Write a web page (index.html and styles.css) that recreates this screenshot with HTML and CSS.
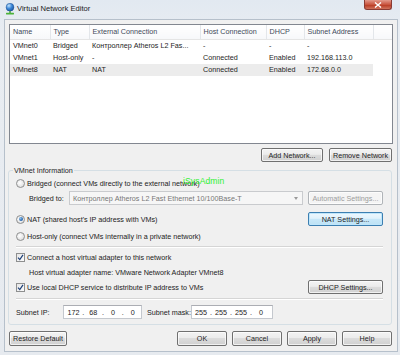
FILE: index.html
```html
<!DOCTYPE html>
<html>
<head>
<meta charset="utf-8">
<link rel="stylesheet" href="styles.css">
</head>
<body>
<div class="win">
  <div class="titlebar">
    <svg class="appicon" width="10" height="12" viewBox="0 0 10 12">
      <defs>
        <radialGradient id="g" cx="0.35" cy="0.3" r="0.8">
          <stop offset="0" stop-color="#bfe2ff"/>
          <stop offset="0.5" stop-color="#3a86d6"/>
          <stop offset="1" stop-color="#1a4f9a"/>
        </radialGradient>
      </defs>
      <circle cx="5" cy="4.2" r="3.9" fill="url(#g)" stroke="#21508f" stroke-width="0.5"/>
      <rect x="4.3" y="8" width="1.4" height="2" fill="#3d9a2e"/>
      <rect x="1" y="9.8" width="8" height="1.6" rx="0.4" fill="#4cb33a"/>
    </svg>
    <span class="title">Virtual Network Editor</span>
    <div class="close">
      <svg width="8" height="6" viewBox="0 0 8 6"><path d="M1 0.5 L7 5.5 M7 0.5 L1 5.5" stroke="#fff" stroke-width="1.4"/></svg>
    </div>
  </div>
  <div class="client">
    <div class="list">
      <table class="grid">
        <colgroup>
          <col class="c1"><col class="c2"><col class="c3"><col class="c4"><col class="c5"><col class="c6"><col>
        </colgroup>
        <thead>
          <tr><th>Name</th><th>Type</th><th>External Connection</th><th>Host Connection</th><th>DHCP</th><th>Subnet Address</th><th class="filler"></th></tr>
        </thead>
        <tbody>
          <tr class="gap"><td colspan="7"></td></tr>
          <tr><td>VMnet0</td><td>Bridged</td><td>Контроллер Atheros L2 Fas...</td><td>-</td><td>-</td><td>-</td><td></td></tr>
          <tr><td>VMnet1</td><td>Host-only</td><td>-</td><td>Connected</td><td>Enabled</td><td>192.168.113.0</td><td></td></tr>
          <tr class="sel"><td>VMnet8</td><td>NAT</td><td>NAT</td><td>Connected</td><td>Enabled</td><td>172.68.0.0</td><td class="nosel"></td></tr>
        </tbody>
      </table>
    </div>
    <div class="listbtns">
      <div class="btn w62">Add Network...</div>
      <div class="btn w63">Remove Network</div>
    </div>
    <div class="group">
      <div class="gtitle">VMnet Information</div>
      <div class="wm">iSysAdmin</div>
      <div class="row r12 first">
        <span class="radio"></span><span class="lbl">Bridged (connect VMs directly to the external network)</span>
      </div>
      <div class="row r14 mt2">
        <span class="bridgelbl">Bridged to:</span>
        <div class="combo"><span class="combotext">Контроллер Atheros L2 Fast Ethernet 10/100Base-T</span><span class="arrow"></span></div>
        <div class="btn w75 disabled ml5">Automatic Settings...</div>
      </div>
      <div class="row r14 mt7">
        <span class="radio on"></span><span class="lbl">NAT (shared host's IP address with VMs)</span>
        <div class="btn w75 default right">NAT Settings...</div>
      </div>
      <div class="row r12 mt4">
        <span class="radio"></span><span class="lbl">Host-only (connect VMs internally in a private network)</span>
      </div>
      <div class="sep mt4"></div>
      <div class="row r12 mt3">
        <span class="check"><svg width="7" height="7" viewBox="0 0 7 7"><path d="M1 3.6 L2.8 5.6 L6 0.8" fill="none" stroke="#1c3f78" stroke-width="1.2"/></svg></span><span class="lbl">Connect a host virtual adapter to this network</span>
      </div>
      <div class="row r12 mt3">
        <span class="indent">Host virtual adapter name: VMware Network Adapter VMnet8</span>
      </div>
      <div class="row r14 mt2">
        <span class="check"><svg width="7" height="7" viewBox="0 0 7 7"><path d="M1 3.6 L2.8 5.6 L6 0.8" fill="none" stroke="#1c3f78" stroke-width="1.2"/></svg></span><span class="lbl">Use local DHCP service to distribute IP address to VMs</span>
        <div class="btn w75 right">DHCP Settings...</div>
      </div>
      <div class="sep mt4"></div>
      <div class="row r14 mt5">
        <span class="iplbl">Subnet IP:</span>
        <div class="ip w79"><span class="seg">172</span><span class="dot">.</span><span class="seg">68</span><span class="dot">.</span><span class="seg">0</span><span class="dot">.</span><span class="seg">0</span></div>
        <span class="masklbl">Subnet mask:</span>
        <div class="ip w82"><span class="seg">255</span><span class="dot">.</span><span class="seg">255</span><span class="dot">.</span><span class="seg">255</span><span class="dot">.</span><span class="seg">0</span></div>
      </div>
    </div>
    <div class="footer">
      <div class="btn w58">Restore Default</div>
      <div class="btn w50 right">OK</div>
      <div class="btn w50">Cancel</div>
      <div class="btn w50">Apply</div>
      <div class="btn w50">Help</div>
    </div>
  </div>
</div>
</body>
</html>
```

FILE: styles.css
```css
* { box-sizing: border-box; }
html, body { margin: 0; padding: 0; }
body {
  width: 400px;
  height: 355px;
  overflow: hidden;
  font-family: "Liberation Sans", Arial, sans-serif;
  font-size: 7.2px;
  color: #222;
  background: #e6ebf1;
}
.win {
  width: 400px;
  height: 355px;
  background: linear-gradient(#e2e9f1, #e9edf2 40px, #e6eaef);
}
.titlebar {
  height: 19px;
  display: flex;
  align-items: flex-start;
}
.appicon { margin: 3px 0 0 5px; }
.title {
  margin: 4px 0 0 2px;
  font-size: 7.6px;
  line-height: 10px;
  color: #1a1a1a;
}
.close {
  margin-left: auto;
  margin-right: 8px;
  width: 28px;
  height: 10px;
  border: 1px solid #8a3b33;
  border-top: none;
  border-radius: 0 0 3px 3px;
  background: linear-gradient(#e39a8c, #c9553f 50%, #b83a22 55%, #d0735d);
  display: flex;
  align-items: center;
  justify-content: center;
}
.client {
  margin-left: 4px;
  width: 394px;
  height: 333px;
  background: #f0f0f0;
  border: 1px solid #b6c0cb;
  padding: 4px 0 0 3px;
}
.list {
  margin-left: 1px;
  width: 384px;
  height: 120px;
  border: 1px solid #828790;
  background: #fff;
}
.grid {
  border-collapse: collapse;
  table-layout: fixed;
  width: 382px;
}
.c1 { width: 40px; }
.c2 { width: 39px; }
.c3 { width: 111px; }
.c4 { width: 66px; }
.c5 { width: 38px; }
.c6 { width: 69px; }
.grid th {
  height: 14px;
  padding: 0 0 0 3px;
  font-weight: normal;
  text-align: left;
  color: #3e4a5a;
  border-right: 1px solid #e3e6ea;
  border-bottom: 1px solid #e5e5e5;
  background: linear-gradient(#ffffff, #f7f8fa);
  white-space: nowrap;
  overflow: hidden;
  line-height: 13px;
}
.grid th.filler { border-right: none; }
.grid td {
  height: 12px;
  padding: 0 0 0 3px;
  line-height: 12px;
  white-space: nowrap;
  overflow: hidden;
  color: #252525;
}
.grid tr.gap td { height: 1px; line-height: 1px; padding: 0; }
.grid tr.sel td { background: #ececec; }
.grid tr.sel td.nosel { background: #fff; }

.btn {
  height: 14px;
  border: 1px solid #707070;
  border-radius: 2px;
  background: linear-gradient(#f3f3f3, #ececec 45%, #dcdcdc 50%, #d0d0d0);
  box-shadow: inset 0 0 0 1px rgba(255,255,255,0.7);
  display: flex;
  align-items: center;
  justify-content: center;
  white-space: nowrap;
  color: #1e1e1e;
  flex: none;
}
.btn.disabled {
  border-color: #b0b4b8;
  background: #f4f4f4;
  color: #9c9c9c;
}
.btn.default {
  border-color: #3c7fb1;
  background: linear-gradient(#eef8fe, #e0f2fc 45%, #c8e8f9 50%, #bde2f5);
  box-shadow: inset 0 0 0 1px #bfe6fb;
}
.w50 { width: 50px; }
.w58 { width: 58px; }
.w62 { width: 62px; }
.w63 { width: 63px; }
.w75 { width: 75px; }
.ml5 { margin-left: 5px; }
.right { margin-left: auto; }

.listbtns {
  display: flex;
  justify-content: flex-end;
  gap: 6px;
  width: 384px;
  margin-top: 4px;
}
.group {
  position: relative;
  margin-top: 8px;
  width: 384px;
  height: 155px;
  border: 1px solid #d5dfe5;
  border-radius: 3px;
  padding: 0 8px 0 7px;
}
.gtitle {
  margin: -5px 0 0 -3px;
  width: fit-content;
  padding: 0 1px;
  background: #f0f0f0;
  line-height: 10px;
  color: #1e1e1e;
}
.wm {
  position: absolute;
  left: 174px;
  top: 5px;
  font-size: 8.6px;
  color: #2ff02f;
  letter-spacing: 0.1px;
}
.row {
  display: flex;
  align-items: center;
  white-space: nowrap;
}
.r12 { height: 12px; }
.r14 { height: 14px; }
.first { margin-top: 1px; }
.mt2 { margin-top: 2px; }
.mt3 { margin-top: 3px; }
.mt4 { margin-top: 4px; }
.mt5 { margin-top: 5px; }
.mt7 { margin-top: 7px; }
.radio {
  width: 9px;
  height: 9px;
  border-radius: 50%;
  border: 1px solid #8e8f8f;
  background: radial-gradient(circle at 40% 40%, #ffffff, #e2e2e2 70%, #d2d2d2);
  flex: none;
  display: flex;
  align-items: center;
  justify-content: center;
}
.radio.on::after {
  content: "";
  width: 4px;
  height: 4px;
  border-radius: 50%;
  background: radial-gradient(circle at 35% 35%, #8fc3ee, #2b6bb3 60%, #1d4f8e);
}
.check {
  width: 9px;
  height: 9px;
  border: 1px solid #8e8f8f;
  background: linear-gradient(135deg, #e6e6e6, #fbfbfb);
  flex: none;
  display: flex;
  align-items: center;
  justify-content: center;
}
.lbl { margin-left: 2px; }
.bridgelbl { margin-left: 13px; width: 40px; }
.combo {
  width: 234px;
  height: 14px;
  border: 1px solid #c9cbce;
  background: #f6f6f6;
  display: flex;
  align-items: center;
  padding-left: 3px;
  color: #767676;
}
.combotext { flex: 1; }
.arrow {
  width: 0; height: 0;
  margin-right: 4px;
  border-left: 2.5px solid transparent;
  border-right: 2.5px solid transparent;
  border-top: 3px solid #9a9a9a;
}
.sep {
  height: 2px;
  border-top: 1px solid #d5d5d5;
  border-bottom: 1px solid #fff;
}
.indent { margin-left: 13px; }
.iplbl { width: 47px; }
.masklbl { width: 44px; margin-left: 5px; }
.ip {
  height: 14px;
  border: 1px solid #c4c8ce;
  border-top-color: #abadb3;
  background: #fff;
  display: flex;
  align-items: center;
  padding-left: 1px;
}
.w79 { width: 79px; }
.w82 { width: 82px; }
.seg { width: 17px; text-align: center; }
.w82 .seg { width: 16px; }
.dot { width: 3px; text-align: center; }
.w82 .dot { width: 4px; }
.footer {
  display: flex;
  gap: 5px;
  width: 384px;
  margin-top: 6px;
  padding-left: 1px;
}
.footer .btn { height: 15px; }
```
